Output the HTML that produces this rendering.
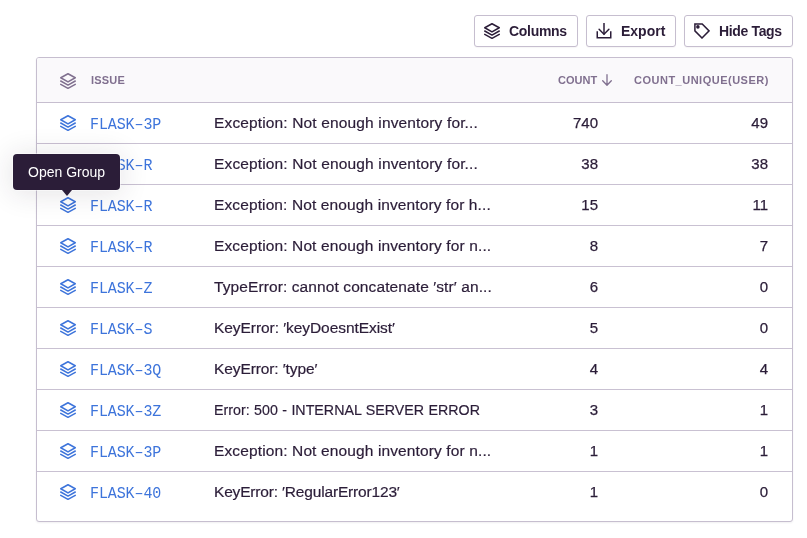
<!DOCTYPE html>
<html><head><meta charset="utf-8">
<style>
*{box-sizing:border-box;margin:0;padding:0}
html,body{width:807px;height:538px;overflow:hidden;background:#fff}
body{position:relative;will-change:transform;font-family:"Liberation Sans",sans-serif;color:#2b1d38}
.btn{position:absolute;top:15px;height:32px;border:1px solid #c6becf;border-radius:3px;background:#fff;box-shadow:0 1px 1px rgba(43,29,56,0.04)}
.btn svg{position:absolute;top:7px;left:9px}
.btn span{position:absolute;top:0;line-height:30px;font-weight:bold;font-size:14px;white-space:nowrap}
.panel{position:absolute;left:36px;top:57px;width:757px;height:465px;border:1px solid #c6becf;border-radius:3px;background:#fff;box-shadow:0 1px 2px rgba(43,34,51,0.07)}
.head{position:absolute;left:0;top:0;width:755px;height:45px;background:#faf9fb;border-bottom:1px solid #c6becf;border-radius:2px 2px 0 0}
.ht{position:absolute;top:0;line-height:45px;font-size:11px;font-weight:bold;color:#80708f;white-space:nowrap}
.row{position:absolute;left:0;width:755px;height:41px;border-bottom:1px solid #c9c1d2}
.row svg{position:absolute;left:23px;top:12px}
.id{position:absolute;left:53px;top:-0.5px;line-height:40px;font-family:"Liberation Mono",monospace;font-size:15px;letter-spacing:-0.1px;transform:scaleY(1.13);transform-origin:0 0;color:#3d74db;white-space:nowrap}
.ds{position:absolute;left:177px;top:0;line-height:40px;font-size:15.5px;white-space:nowrap;-webkit-text-stroke:0.2px #2b1d38}
.n1{position:absolute;right:194px;top:0;line-height:40px;font-size:15px;-webkit-text-stroke:0.25px #2b1d38}
.n2{position:absolute;right:24px;top:0;line-height:40px;font-size:15px;-webkit-text-stroke:0.25px #2b1d38}
.tip{position:absolute;left:13px;top:154px;width:107px;height:35.6px;background:#2b1d38;border-radius:4px;box-shadow:0 0 0 1px rgba(255,255,255,0.5),0 2px 28px 2px rgba(43,34,51,0.12)}
.tip span{position:absolute;left:15px;top:0;line-height:36px;font-size:14px;color:#fff;white-space:nowrap}
.arrow{position:absolute;left:49px;top:35.5px;width:0;height:0;border-left:5.5px solid transparent;border-right:5.5px solid transparent;border-top:6.3px solid #2b1d38}
</style></head><body>
<svg width="0" height="0" style="position:absolute">
 <defs>
  <g id="stack" fill="none" stroke-width="1.5" stroke-linejoin="round" stroke-linecap="round">
   <path d="M8 0.75 L15.25 4.75 L8 8.9 L0.75 4.75 Z"/>
   <path d="M0.75 8 L8 12.1 L15.25 8"/>
   <path d="M0.75 11.3 L8 15.3 L15.25 11.3"/>
  </g>
 </defs>
</svg>

<div class="btn" style="left:474px;width:104px">
 <svg width="16" height="16" viewBox="0 0 16 16" stroke="#2b1d38"><use href="#stack"/></svg>
 <span style="left:34px;letter-spacing:-0.3px">Columns</span>
</div>
<div class="btn" style="left:586px;width:90px">
 <svg width="16" height="16" viewBox="0 0 16 16" fill="none" stroke="#2b1d38" stroke-width="1.5"><path d="M8 0.3 V11" stroke-linecap="round"/><path d="M3.1 6.3 L8 11.2 L12.9 6.3" stroke-linecap="round" stroke-linejoin="miter"/><path d="M1.25 9 V14.75 H14.75 V9" stroke-linecap="square" stroke-linejoin="miter"/></svg>
 <span style="left:34px">Export</span>
</div>
<div class="btn" style="left:684px;width:109px">
 <svg width="16" height="16" viewBox="0 0 16 16" fill="none" stroke="#2b1d38" stroke-width="1.5" stroke-linejoin="miter"><path d="M0.9 0.9 H8.2 L15.1 7.9 L8 15 L0.9 7.9 Z"/><circle cx="3.9" cy="3.9" r="1.8" fill="#2b1d38" stroke="none"/></svg>
 <span style="left:34px;letter-spacing:-0.35px">Hide Tags</span>
</div>

<div class="panel">
 <div class="head">
  <svg style="position:absolute;left:23px;top:15px" width="16" height="16" viewBox="0 0 16 16" stroke="#80708f"><use href="#stack"/></svg>
  <span class="ht" style="left:54px;letter-spacing:0.2px">ISSUE</span>
  <span class="ht" style="left:521px">COUNT</span>
  <svg style="position:absolute;left:565px;top:16px" width="10" height="12" viewBox="0 0 10 12" fill="none" stroke="#80708f" stroke-width="1.3" stroke-linecap="round" stroke-linejoin="round"><path d="M5 0.7 V11.2 M0.7 6.7 L5 11.2 L9.3 6.7"/></svg>
  <span class="ht" style="left:597px;letter-spacing:0.5px">COUNT_UNIQUE(USER)</span>
 </div>
 <div class="row" style="top:45px"><svg width="16" height="16" viewBox="0 0 16 16" stroke="#3d74db"><use href="#stack"/></svg><span class="id">FLASK–3P</span><span class="ds" style="letter-spacing:0.144px">Exception: Not enough inventory for...</span><span class="n1">740</span><span class="n2">49</span></div>
 <div class="row" style="top:86px"><svg width="16" height="16" viewBox="0 0 16 16" stroke="#3d74db"><use href="#stack"/></svg><span class="id">FLASK–R</span><span class="ds" style="letter-spacing:0.144px">Exception: Not enough inventory for...</span><span class="n1">38</span><span class="n2">38</span></div>
 <div class="row" style="top:127px"><svg width="16" height="16" viewBox="0 0 16 16" stroke="#3d74db"><use href="#stack"/></svg><span class="id">FLASK–R</span><span class="ds" style="letter-spacing:0.115px">Exception: Not enough inventory for h...</span><span class="n1">15</span><span class="n2">11</span></div>
 <div class="row" style="top:168px"><svg width="16" height="16" viewBox="0 0 16 16" stroke="#3d74db"><use href="#stack"/></svg><span class="id">FLASK–R</span><span class="ds" style="letter-spacing:0.125px">Exception: Not enough inventory for n...</span><span class="n1">8</span><span class="n2">7</span></div>
 <div class="row" style="top:209px"><svg width="16" height="16" viewBox="0 0 16 16" stroke="#3d74db"><use href="#stack"/></svg><span class="id">FLASK–Z</span><span class="ds" style="letter-spacing:0.100px">TypeError: cannot concatenate ′str′ an...</span><span class="n1">6</span><span class="n2">0</span></div>
 <div class="row" style="top:250px"><svg width="16" height="16" viewBox="0 0 16 16" stroke="#3d74db"><use href="#stack"/></svg><span class="id">FLASK–S</span><span class="ds" style="letter-spacing:-0.058px">KeyError: ′keyDoesntExist′</span><span class="n1">5</span><span class="n2">0</span></div>
 <div class="row" style="top:291px"><svg width="16" height="16" viewBox="0 0 16 16" stroke="#3d74db"><use href="#stack"/></svg><span class="id">FLASK–3Q</span><span class="ds" style="letter-spacing:-0.100px">KeyError: ′type′</span><span class="n1">4</span><span class="n2">4</span></div>
 <div class="row" style="top:332px"><svg width="16" height="16" viewBox="0 0 16 16" stroke="#3d74db"><use href="#stack"/></svg><span class="id">FLASK–3Z</span><span class="ds" style="letter-spacing:0;word-spacing:0.5px;transform:scaleX(0.9194);transform-origin:0 50%">Error: 500 - INTERNAL SERVER ERROR</span><span class="n1">3</span><span class="n2">1</span></div>
 <div class="row" style="top:373px"><svg width="16" height="16" viewBox="0 0 16 16" stroke="#3d74db"><use href="#stack"/></svg><span class="id">FLASK–3P</span><span class="ds" style="letter-spacing:0.125px">Exception: Not enough inventory for n...</span><span class="n1">1</span><span class="n2">1</span></div>
 <div class="row" style="top:414px;border-bottom:none"><svg width="16" height="16" viewBox="0 0 16 16" stroke="#3d74db"><use href="#stack"/></svg><span class="id">FLASK–40</span><span class="ds" style="letter-spacing:-0.169px">KeyError: ′RegularError123′</span><span class="n1">1</span><span class="n2">0</span></div>
</div>

<div class="tip"><span>Open Group</span><div class="arrow"></div></div>
</body></html>
